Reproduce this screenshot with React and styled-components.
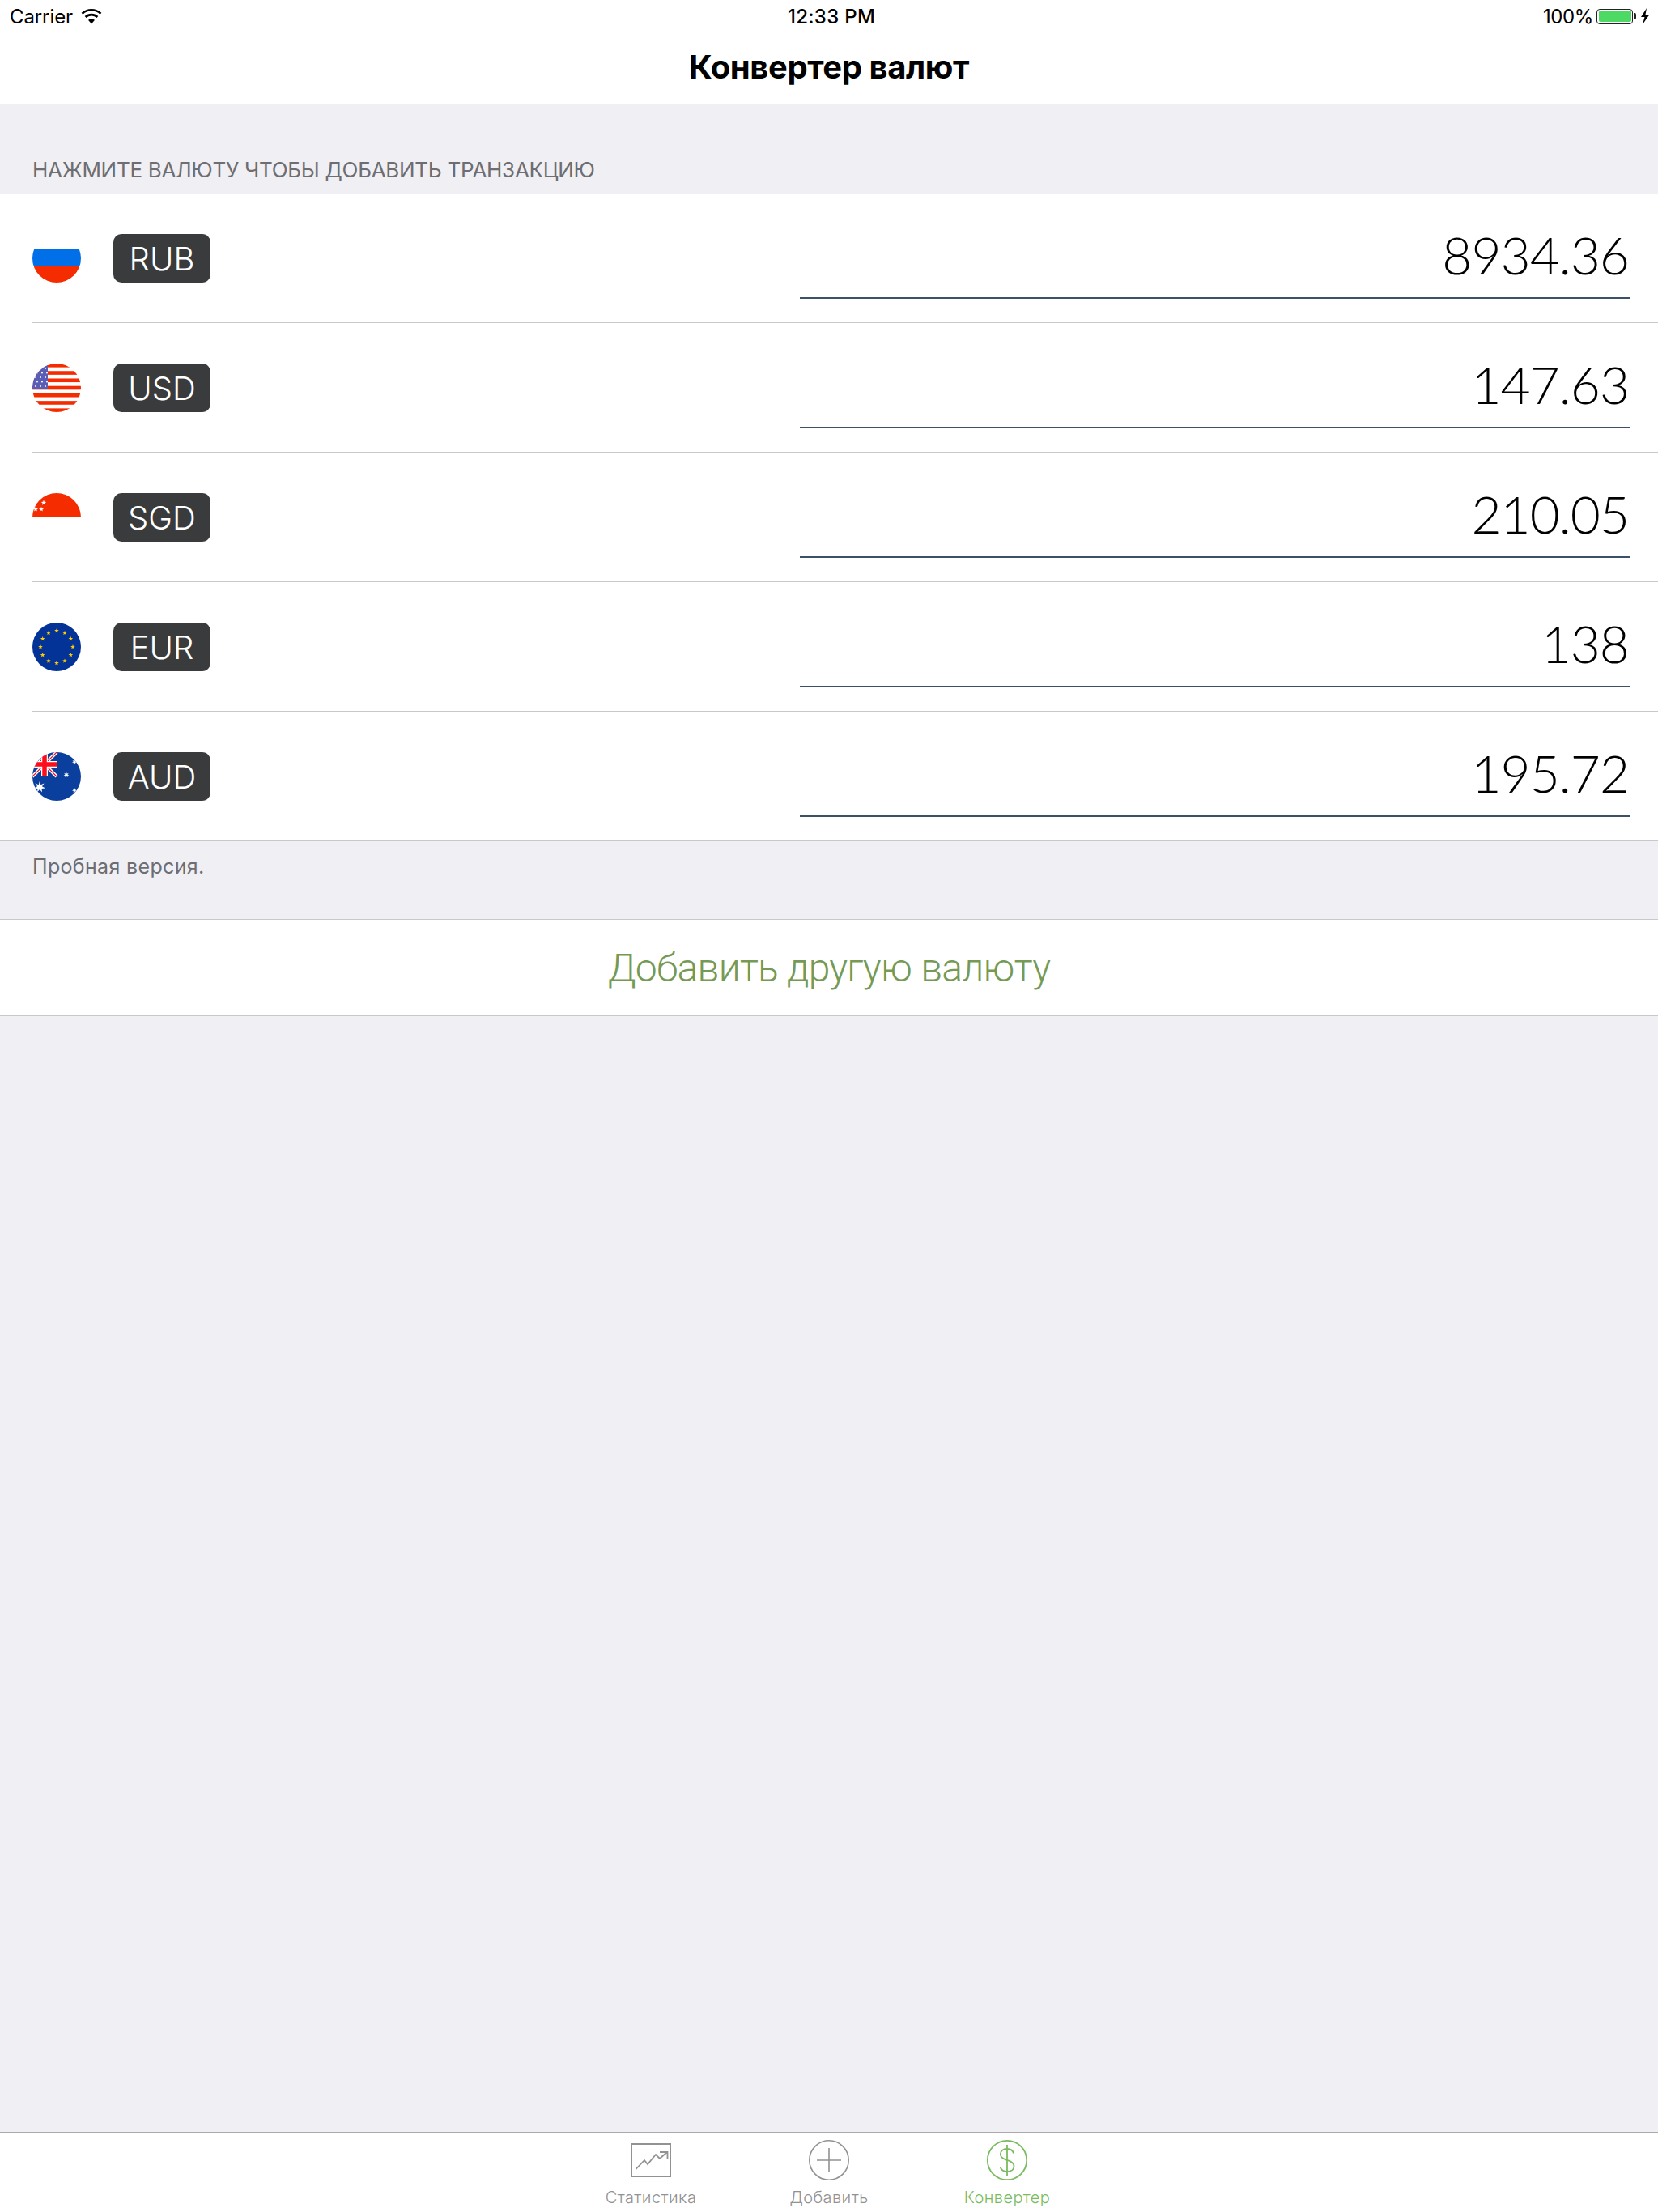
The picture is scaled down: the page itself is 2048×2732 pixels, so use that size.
import React from "react";
import styled, { createGlobalStyle } from "styled-components";

const Global = createGlobalStyle`
  html, body { margin: 0; padding: 0; background: #efeff4; }
  * { box-sizing: border-box; }
`;
const SANS = `Inter, "Liberation Sans", sans-serif`;

const Page = styled.div`
  width: 2048px; height: 2732px; display: flex; flex-direction: column;
  background: #efeff4; font-family: ${SANS}; overflow: hidden;
`;
const TopBar = styled.header`
  height: 129px; background: #fff; border-bottom: 1px solid #a9a9ae; flex: none;
`;
const StatusBar = styled.div`
  height: 40px; display: grid; grid-template-columns: 1fr auto 1fr; align-items: center;
  padding: 0 10px 0 12px; font-size: 24px; color: #000;
`;
const StatusLeft = styled.div`display: flex; align-items: center; gap: 10px; letter-spacing: -.1px;`;
const StatusTime = styled.div`font-weight: 500; font-size: 24px; letter-spacing: .3px; transform: translateX(2px);`;
const StatusRight = styled.div`display: flex; align-items: center; justify-content: flex-end; gap: 4px; letter-spacing: -.4px;`;
const Battery = styled.div`
  width: 45px; height: 19px; border: 1.5px solid #222; border-radius: 4px; padding: 1.5px; position: relative; margin-right: 5px;
  &::after { content: ""; position: absolute; right: -5px; top: 4px; width: 3px; height: 8px; background: #222; border-radius: 0 2px 2px 0; }
`;
const BatteryFill = styled.div`width: 100%; height: 100%; background: #4cd964; border-radius: 2px;`;
const Title = styled.h1`
  margin: 0; height: 84px; display: flex; align-items: center; justify-content: center;
  font-size: 40px; font-weight: 700; color: #000; letter-spacing: -.4px;
`;
const SectionHeader = styled.div`
  height: 111px; flex: none; display: flex; align-items: flex-end; padding: 0 40px 14px;
  font-size: 26px; color: #6d6d72; border-bottom: 1px solid #c8c7cc; letter-spacing: -.28px;
`;
const List = styled.div`background: #fff; border-bottom: 1px solid #c8c7cc; flex: none; padding-left: 40px;`;
const Row = styled.div`
  height: ${p => (p.$first || p.$last ? 159 : 160)}px; display: flex; align-items: flex-start;
  padding: ${p => (p.$first ? 49 : 50)}px 35px 0 0;
  border-bottom: ${p => (p.$last ? "none" : "1px solid #c8c7cc")};
`;
const Badge = styled.div`
  width: 120px; height: 60px; margin-left: 40px; background: #3a3b3d; border-radius: 10px; color: #fff;
  display: flex; align-items: center; justify-content: center; font-size: 40px; font-weight: 300;
`;
const Field = styled.div`
  width: 1025px; height: 80px; margin-left: auto; border-bottom: 2px solid #3c5068; display: flex;
  align-items: flex-start; justify-content: flex-end; color: #000;
  font-family: Lato, sans-serif; font-weight: 300; font-size: 64px; line-height: 52px; padding-right: 1px; letter-spacing: -1px;
`;
const Footer = styled.div`
  height: 96px; flex: none; padding: 15px 40px 0; font-size: 25px; line-height: 32px; color: #6d6d72; letter-spacing: .33px;
`;
const AddButton = styled.div`
  height: 120px; flex: none; background: #fff; border-top: 1px solid #c8c7cc; border-bottom: 1px solid #c8c7cc;
  display: flex; align-items: center; justify-content: center; color: #759a56;
  font-family: Roboto, sans-serif; font-weight: 300; font-size: 48px; letter-spacing: -.75px;
`;
const Spacer = styled.div`flex: 1;`;
const TabBar = styled.nav`
  height: 99px; flex: none; background: #fff; border-top: 1px solid #a9a9ae; display: flex; justify-content: center;
`;
const Tab = styled.div`
  width: 220px; display: flex; flex-direction: column; align-items: center; padding-top: 7px;
  color: ${p => (p.$active ? "#79bb5f" : "#929292")};
`;
const TabIcon = styled.svg`width: 54px; height: 54px; flex: none;`;
const TabLabel = styled.span`font-size: 20px; font-weight: 300; line-height: 24px; margin-top: 7px; letter-spacing: .4px;`;

const star = (cx, cy, r, n = 5, inner = 0.42) => {
  const pts = [];
  for (let i = 0; i < n * 2; i++) {
    const a = -Math.PI / 2 + (i * Math.PI) / n;
    const q = i % 2 ? r * inner : r;
    pts.push(`${(cx + q * Math.cos(a)).toFixed(2)},${(cy + q * Math.sin(a)).toFixed(2)}`);
  }
  return pts.join(" ");
};

const FlagSvg = styled.svg`width: 60px; height: 60px; flex: none; display: block;`;
const Flag = ({ id, children }) => (
  <FlagSvg viewBox="0 0 60 60">
    <defs><clipPath id={id}><circle cx="30" cy="30" r="30" /></clipPath></defs>
    <g clipPath={`url(#${id})`}>{children}</g>
  </FlagSvg>
);

const FlagRU = () => (
  <Flag id="ru">
    <rect y="19" width="60" height="21" fill="#006fe8" />
    <rect y="40" width="60" height="20" fill="#f42c00" />
  </Flag>
);
const FlagUS = () => (
  <Flag id="us">
    {Array.from({ length: 7 }, (_, i) => (
      <rect key={i} y={i * 9.23} width="60" height="4.62" fill="#f42c00" />
    ))}
    <rect width="19" height="32" fill="#5a5db5" />
    {Array.from({ length: 5 }, (_, r) =>
      Array.from({ length: 3 }, (_, c) => (
        <circle key={`${r}-${c}`} cx={4 + c * 6 + (r % 2 ? 2 : 0)} cy={6 + r * 5.5} r="1" fill="#fff" />
      ))
    )}
  </Flag>
);
const FlagSG = () => (
  <Flag id="sg">
    <rect width="60" height="30" fill="#f42c00" />
    <polygon points={star(14, 12, 3.4)} fill="#fff" />
    <polygon points={star(4, 20, 3.2)} fill="#fff" />
    <polygon points={star(11, 20, 3.2)} fill="#fff" />
  </Flag>
);
const FlagEU = () => (
  <Flag id="eu">
    <rect width="60" height="60" fill="#043398" />
    {Array.from({ length: 12 }, (_, i) => {
      const a = (i * Math.PI) / 6;
      return <polygon key={i} points={star(30 + 20 * Math.sin(a), 30 - 20 * Math.cos(a), 2.9)} fill="#ffcc00" />;
    })}
  </Flag>
);
const FlagAU = () => (
  <Flag id="au">
    <rect width="60" height="60" fill="#0a3f9e" />
    <path d="M0 0 L30 30 M30 0 L0 30" stroke="#fff" strokeWidth="4" />
    <path d="M0 0 L30 30 M30 0 L0 30" stroke="#f40f24" strokeWidth="1.2" />
    <path d="M15 0 V30 M0 15 H30" stroke="#fff" strokeWidth="8" />
    <path d="M15 0 V30 M0 15 H30" stroke="#fb0d1b" strokeWidth="5.5" />
    <polygon points={star(42, 28, 3.6, 7)} fill="#fff" />
    <polygon points={star(9, 43, 7.2, 7)} fill="#fff" />
    <polygon points={star(52, 12, 3.2, 7)} fill="#fff" />
    <polygon points={star(52, 47, 3.2, 7)} fill="#fff" />
  </Flag>
);

const rows = [
  { code: "RUB", value: "8934.36", F: FlagRU },
  { code: "USD", value: "147.63", F: FlagUS },
  { code: "SGD", value: "210.05", F: FlagSG },
  { code: "EUR", value: "138", F: FlagEU },
  { code: "AUD", value: "195.72", F: FlagAU },
];

export default function App() {
  return (
    <Page>
      <Global />
      <TopBar>
        <StatusBar>
          <StatusLeft>
            Carrier
            <svg width="26" height="19" viewBox="0 0 26 19">
              <path d="M13 18.5 L9 13.8 A6.5 6.5 0 0 1 17 13.8 Z" fill="#000" />
              <path d="M5.6 10 A11 11 0 0 1 20.4 10" fill="none" stroke="#000" strokeWidth="2.6" />
              <path d="M1.5 5.8 A17 17 0 0 1 24.5 5.8" fill="none" stroke="#000" strokeWidth="2.6" />
            </svg>
          </StatusLeft>
          <StatusTime>12:33 PM</StatusTime>
          <StatusRight>
            100%
            <Battery><BatteryFill /></Battery>
            <svg width="12" height="20" viewBox="0 0 12 20">
              <path d="M8 0 L1 11 H5.5 L3 20 L11.5 8 H6.5 Z" fill="#000" />
            </svg>
          </StatusRight>
        </StatusBar>
        <Title>Конвертер валют</Title>
      </TopBar>
      <SectionHeader>НАЖМИТЕ ВАЛЮТУ ЧТОБЫ ДОБАВИТЬ ТРАНЗАКЦИЮ</SectionHeader>
      <List>
        {rows.map(({ code, value, F }, i) => (
          <Row key={code} $first={i === 0} $last={i === rows.length - 1}>
            <F />
            <Badge>{code}</Badge>
            <Field>{value}</Field>
          </Row>
        ))}
      </List>
      <Footer>Пробная версия.</Footer>
      <AddButton>Добавить другую валюту</AddButton>
      <Spacer />
      <TabBar>
        <Tab>
          <TabIcon viewBox="0 0 54 54" fill="none" stroke="currentColor">
            <rect x="3" y="7" width="48" height="40" strokeWidth="2" />
            <path d="M8.5 38 L19 27 L23 32 L33 20 L38 25 L47 17 M38 17 H47.5 V26" strokeWidth="1.8" />
          </TabIcon>
          <TabLabel>Статистика</TabLabel>
        </Tab>
        <Tab>
          <TabIcon viewBox="0 0 54 54" fill="none" stroke="currentColor">
            <circle cx="27" cy="27" r="24.2" strokeWidth="1.6" />
            <path d="M12 27 H42 M27 12 V42" strokeWidth="1.6" />
          </TabIcon>
          <TabLabel>Добавить</TabLabel>
        </Tab>
        <Tab $active>
          <TabIcon viewBox="0 0 54 54" fill="none" stroke="currentColor">
            <circle cx="27" cy="27" r="24.2" strokeWidth="1.8" />
            <path d="M35 18.5 C34 14.5 31 13 27 13 C22 13 18.8 15.5 18.8 19.5 C18.8 24 22.5 25.6 27 26.8 C32 28.2 35.5 30 35.5 34.4 C35.5 38.6 32 41 27 41 C22.5 41 19.4 39 18.5 35 M27 8 V46" strokeWidth="1.8" />
          </TabIcon>
          <TabLabel>Конвертер</TabLabel>
        </Tab>
      </TabBar>
    </Page>
  );
}
